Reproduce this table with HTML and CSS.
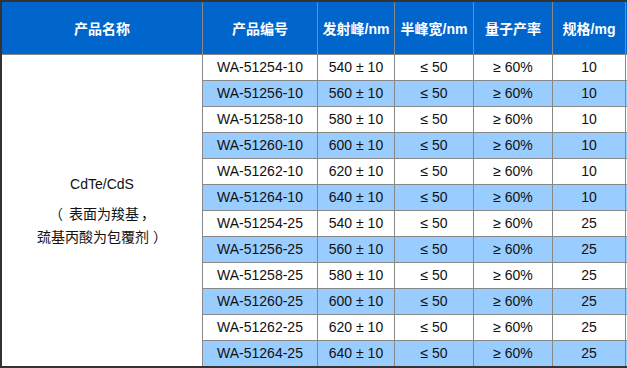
FILE: index.html
```html
<!DOCTYPE html>
<html lang="zh-CN">
<head>
<meta charset="utf-8">
<title>CdTe/CdS 量子点</title>
<link rel="stylesheet" href="styles.css">
</head>
<body>
<table class="spec">
  <colgroup>
    <col class="c-name"><col class="c-code"><col class="c-em"><col class="c-fw"><col class="c-qy"><col class="c-size"><col class="c-more">
  </colgroup>
  <thead>
    <tr>
      <th>产品名称</th><th>产品编号</th><th>发射峰/nm</th><th>半峰宽/nm</th><th>量子产率</th><th>规格/mg</th><th></th>
    </tr>
  </thead>
  <tbody>
    <tr>
      <td class="name" rowspan="12">
        <div class="name-main">CdTe/CdS</div>
        <div class="name-sub"><span class="p-open">（</span>表面为羧基<span class="p-comma">，</span><br>巯基丙酸为包覆剂<span class="p-close">）</span></div>
      </td>
      <td>WA-51254-10</td><td>540 ± 10</td><td>≤ 50</td><td>≥ 60%</td><td>10</td><td></td>
    </tr>
    <tr class="alt"><td>WA-51256-10</td><td>560 ± 10</td><td>≤ 50</td><td>≥ 60%</td><td>10</td><td></td></tr>
    <tr><td>WA-51258-10</td><td>580 ± 10</td><td>≤ 50</td><td>≥ 60%</td><td>10</td><td></td></tr>
    <tr class="alt"><td>WA-51260-10</td><td>600 ± 10</td><td>≤ 50</td><td>≥ 60%</td><td>10</td><td></td></tr>
    <tr><td>WA-51262-10</td><td>620 ± 10</td><td>≤ 50</td><td>≥ 60%</td><td>10</td><td></td></tr>
    <tr class="alt"><td>WA-51264-10</td><td>640 ± 10</td><td>≤ 50</td><td>≥ 60%</td><td>10</td><td></td></tr>
    <tr><td>WA-51254-25</td><td>540 ± 10</td><td>≤ 50</td><td>≥ 60%</td><td>25</td><td></td></tr>
    <tr class="alt"><td>WA-51256-25</td><td>560 ± 10</td><td>≤ 50</td><td>≥ 60%</td><td>25</td><td></td></tr>
    <tr><td>WA-51258-25</td><td>580 ± 10</td><td>≤ 50</td><td>≥ 60%</td><td>25</td><td></td></tr>
    <tr class="alt"><td>WA-51260-25</td><td>600 ± 10</td><td>≤ 50</td><td>≥ 60%</td><td>25</td><td></td></tr>
    <tr><td>WA-51262-25</td><td>620 ± 10</td><td>≤ 50</td><td>≥ 60%</td><td>25</td><td></td></tr>
    <tr class="alt"><td>WA-51264-25</td><td>640 ± 10</td><td>≤ 50</td><td>≥ 60%</td><td>25</td><td></td></tr>
  </tbody>
</table>
</body>
</html>
```

FILE: styles.css
```css
html, body {
  margin: 0;
  padding: 0;
  overflow: hidden;
  background: #fff;
}

.spec {
  border-collapse: separate;
  border-spacing: 0;
  table-layout: fixed;
  width: 707px;
  border-top: 2px solid #333;
  border-left: 2px solid #333;
  border-bottom: 2px solid #333;
  font-family: "Liberation Sans", "Noto Sans CJK SC", sans-serif;
  font-size: 14px;
  color: #111;
}

.c-name { width: 201px; }
.c-code { width: 115px; }
.c-em { width: 77px; }
.c-fw { width: 79px; }
.c-qy { width: 79px; }
.c-size { width: 73px; }
.c-more { width: 81px; }

.spec th,
.spec td {
  box-sizing: border-box;
  padding: 0;
  text-align: center;
  vertical-align: middle;
  border-right: 1px solid #888;
  border-bottom: 1px solid #888;
  white-space: nowrap;
  overflow: hidden;
}

.spec th {
  height: 53px;
  background: #0066cc;
  color: #fff;
  font-weight: bold;
  font-size: 14px;
}

.spec td {
  height: 26px;
  line-height: 25px;
  background: #fff;
}

.spec tr.alt td {
  background: #99ccff;
}

.spec tbody tr:last-child td,
.spec td.name {
  border-bottom: none;
}

.spec tbody tr:last-child td {
  height: 25px;
}

.spec td.name {
  background: #fff;
  line-height: 23px;
}

.name-main {
  margin-bottom: 6px;
}

.name-sub {
  font-family: "Noto Sans CJK SC", sans-serif;
  line-height: 23px;
}

.p-open {
  margin-right: 6px;
}

.p-comma {
  margin-left: 2px;
}

.p-close {
  margin-left: 4px;
}
```
